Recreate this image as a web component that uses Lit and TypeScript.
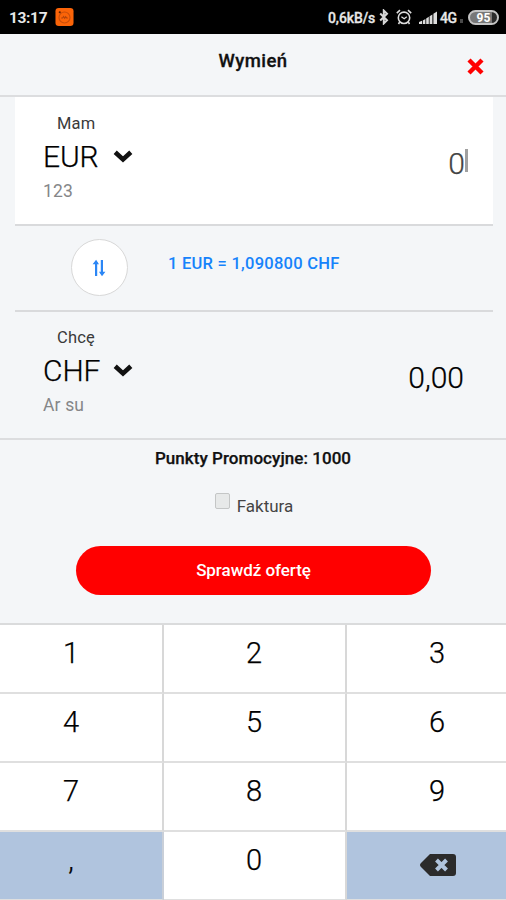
import { LitElement, html, css } from "lit";
import { customElement, property } from "lit/decorators.js";

@customElement("status-bar")
class StatusBar extends LitElement {
  static styles = css`
    :host { display: flex; align-items: center; height: 34px; flex: none; background: #000; color: #e8e8e8; padding: 0 7px 0 9px; box-sizing: border-box; font-weight: 700; }
    .time { font-size: 15.5px; letter-spacing: -0.35px; width: 46px; white-space: nowrap; line-height: 34px; padding-top: 1px; }
    .space { flex: 1; }
    .rate { font-size: 14px; letter-spacing: -0.1px; width: 50px; white-space: nowrap; font-weight: 500; padding-top: 1px; -webkit-text-stroke: 0.3px; }
    .net { font-size: 14px; letter-spacing: -0.4px; width: 18px; margin-left: 3px; font-weight: 500; padding-top: 1px; -webkit-text-stroke: 0.3px; }
    .dot { width: 3px; height: 4px; background: #4a4a4a; margin: 7px 5px 0 2px; }
    .battery { box-sizing: border-box; width: 31px; height: 15px; border: 2px solid #c4c4c4; border-radius: 8px; background: linear-gradient(90deg, #777 0 80%, #2c2c2c 80%); font-size: 12px; line-height: 12px; text-align: center; color: #fff; }
    svg { display: block; flex: none; }
    .bt { margin-left: 1px; }
    .alarm { margin-left: 7px; }
    .signal { margin-left: 7px; }
  `;
  render() {
    return html`
      <span class="time">13:17</span>
      <svg width="19" height="20" viewBox="0 0 20 20">
        <rect x="0.5" y="0.5" width="19" height="19" rx="3.5" fill="#fb6408" />
        <circle cx="10" cy="10.5" r="5.8" fill="none" stroke="#c94e0a" stroke-width="1.2" />
        <path d="M6.5 11h1.5l1-1.5 1.2 1.8 1-1.5 1 1.2h1.3" fill="none" stroke="#b3440a" stroke-width="1.2" />
        <circle cx="5" cy="5" r="1.1" fill="#571f00" />
      </svg>
      <span class="space"></span>
      <span class="rate">0,6kB/s</span>
      <svg class="bt" width="10" height="16" viewBox="0 0 10 16"><path d="M1.2 4.5 8 11.3 4.8 14.4V1.6L8 4.7 1.2 11.5" fill="none" stroke="#d8d8d8" stroke-width="2" /></svg>
      <svg class="alarm" width="16" height="16" viewBox="0 0 16 16" fill="none" stroke="#dcdcdc">
        <circle cx="8" cy="8.8" r="5.7" stroke-width="1.6" /><path d="M.8 4.2 4 1.2M15.2 4.2 12 1.2M3.6 13.2 2.5 15M12.4 13.2l1.1 1.8" stroke-width="1.6" /><path d="m5.4 7.8 2.8 2 2.6-2" stroke-width="1.3" />
      </svg>
      <svg class="signal" width="18" height="13" viewBox="0 0 18 13" fill="#dcdcdc">
        <path d="M0 13v-2l3-1.2V13zM3.8 13V9.4L6.4 8v5zM7.2 13V7.4l2.6-1.6V13zM10.6 13V5.2l2.8-1.6V13zM14.4 13V2.8L18 .6V13z" />
      </svg>
      <span class="net">4G</span><span class="dot"></span>
      <span class="battery">95</span>`;
  }
}

@customElement("currency-row")
class CurrencyRow extends LitElement {
  @property() label = "";
  @property() code = "";
  @property() note = "";
  static styles = css`
    :host { display: flex; flex: none; justify-content: space-between; padding: 0 28px; }
    .label { font-size: 16.5px; line-height: 20px; padding: 17px 0 0 14px; color: #3a3a3a; letter-spacing: 0.15px; }
    .pick { display: flex; align-items: center; height: 36px; margin-top: 5px; font-size: 30px; line-height: 36px; color: #000; }
    .code { width: 70px; font-weight: 300; letter-spacing: -0.1px; -webkit-text-stroke: 0.25px; }
    .note { font-size: 17.5px; line-height: 22px; margin-top: 5px; color: #858688; letter-spacing: 0.15px; }
    svg { display: block; margin-top: -2px; }
  `;
  render() {
    return html`
      <div>
        <div class="label">${this.label}</div>
        <div class="pick"><span class="code">${this.code}</span>
          <svg width="20" height="14" viewBox="0 0 20 14"><path d="m2.2 3.2 7.8 7.2 7.8-7.2" fill="none" stroke="#111" stroke-width="4.6" /></svg>
        </div>
        <div class="note">${this.note}</div>
      </div>
      <slot></slot>`;
  }
}

@customElement("app-root")
class AppRoot extends LitElement {
  static styles = css`
    * { box-sizing: border-box; }
    :host { display: flex; flex-direction: column; height: 900px; overflow: hidden; background: #f4f6f8; font-family: Roboto, sans-serif; color: #111; }
    .header { display: grid; grid-template-columns: 60px 1fr 60px; height: 63px; border-bottom: 2px solid #dcdddf; flex: none; }
    .title { grid-column: 2; text-align: center; font-size: 18.5px; font-weight: 500; -webkit-text-stroke: 0.3px; letter-spacing: 0.45px; line-height: 22px; padding-top: 16px; }
    .close { margin: 24px 0 0 21px; }
    svg { display: block; }
    .panel { margin: 0 13px 0 15px; }
    .have { height: 129px; background: #fff; border-bottom: 2px solid #d9dadc; }
    .want { height: 127px; margin: -1px 13px 0 15px; }
    .amount { display: flex; font-size: 30px; line-height: 36px; font-weight: 300; color: #000; -webkit-text-stroke: 0.25px; }
    .first { margin: 49px -3px 0 0; color: #444; }
    .caret { width: 3px; height: 23px; margin: 3px 0 0 0; background: #a0a0a0; }
    .second { margin: 49px 1px 0 0; }
    .rate { display: flex; flex: none; height: 86px; border-bottom: 2px solid #d9dadc; padding: 13px 0 0 55.5px; }
    .swap { width: 57px; height: 57px; border: 1.5px solid #d8d8d8; border-radius: 50%; background: #fff; display: grid; place-items: center; }
    .quote { margin: 15px 0 0 40.5px; font-size: 16.5px; letter-spacing: 0.25px; line-height: 20px; font-weight: 500; color: #1683fb; white-space: nowrap; }
    .offer { height: 185px; border-top: 2px solid #dcdddf; display: flex; flex-direction: column; align-items: center; flex: none; }
    .points { font-size: 17px; line-height: 20px; font-weight: 500; -webkit-text-stroke: 0.25px; letter-spacing: 0.05px; margin-top: 8px; white-space: nowrap; }
    .invoice { display: flex; margin: 25px 0 0 2px; gap: 7px; font-size: 17px; line-height: 20px; color: #444; }
    .box { width: 15px; height: 16px; border: 1px solid #c4c6c6; border-radius: 2px; background: #e7e9e9; }
    .faktura { padding-top: 3px; }
    .submit { width: 355px; height: 49px; margin: 30px 0 0 1px; border: 0; padding: 0; border-radius: 25px; background: #f00; color: #fff; font: 500 17px/49px Roboto, sans-serif; letter-spacing: -0.05px; }
    .keys { display: grid; grid-template-columns: repeat(3, 183px); grid-template-rows: repeat(4, 69px); margin-left: -19px; border-top: 2px solid #dadbdc; flex: none; width: 549px; }
    .key { border-right: 2px solid #d8d8d8; border-bottom: 2px solid #dfdfdf; background: #fff; text-align: center; font-size: 29px; line-height: 57px; font-weight: 300; color: #000; padding-right: 1px; -webkit-text-stroke: 0.25px; }
    .alt { background: #b0c4de; border-right-color: #c9cfd8; }
    .del { display: flex; justify-content: center; padding: 22px 0 0 0; }
  `;
  render() {
    const keys = ["1", "2", "3", "4", "5", "6", "7", "8", "9", ",", "0"];
    return html`
      <status-bar></status-bar>
      <div class="header">
        <div class="title">Wymień</div>
        <svg class="close" width="17" height="17" viewBox="0 0 17 17"><path d="m2 2 13 13M15 2 2 15" stroke="#f00" stroke-width="4.4" stroke-linecap="butt" /></svg>
      </div>
      <currency-row class="panel have" label="Mam" code="EUR" note="123">
        <div class="amount first">0<span class="caret"></span></div>
      </currency-row>
      <div class="panel rate">
        <div class="swap">
          <svg width="14" height="18" viewBox="0 0 14 18"><path d="M4.1 17V3M9.9 1v14" stroke="#2b86f5" stroke-width="2.2" /><path d="M.6 5.2 4.1.8 7 5.2zM7 12.8l3 4.4 3.4-4.4z" fill="#2b86f5" /></svg>
        </div>
        <div class="quote">1 EUR = 1,090800 CHF</div>
      </div>
      <currency-row class="want" label="Chcę" code="CHF" note="Ar su">
        <div class="amount second">0,00</div>
      </currency-row>
      <div class="offer">
        <div class="points">Punkty Promocyjne: 1000</div>
        <div class="invoice"><span class="box"></span><span class="faktura">Faktura</span></div>
        <button class="submit">Sprawdź ofertę</button>
      </div>
      <div class="keys">
        ${keys.map((k) => html`<div class="key ${k === "," ? "alt" : ""}">${k}</div>`)}
        <div class="key alt del">
          <svg width="36" height="22" viewBox="0 0 36 22"><path d="M10 0h23q3 0 3 3v16q0 3-3 3H10L1 13q-2-2 0-4z" fill="#2b2b2b" /><path d="m16.5 6 10 10m0-10-10 10" stroke="#b0c4de" stroke-width="4" /></svg>
        </div>
      </div>`;
  }
}
